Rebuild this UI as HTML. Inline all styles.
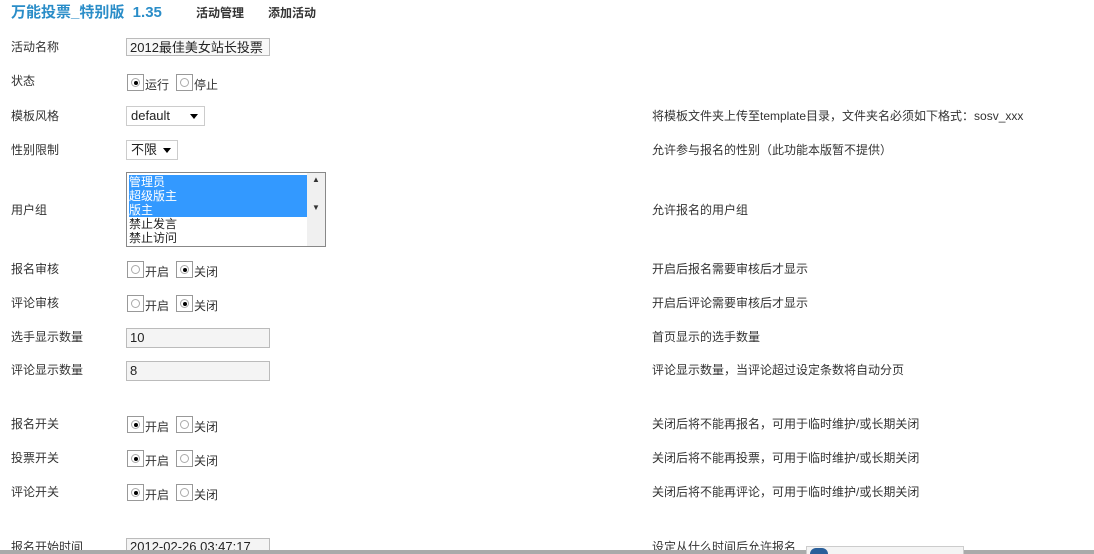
<!DOCTYPE html><html style="overflow:hidden;height:554px"><head><meta charset="utf-8"><style>
body{margin:0;width:1094px;height:554px;overflow:hidden;background:#fff;font-family:"Liberation Sans","Noto Sans CJK SC",sans-serif;font-size:12px;color:#333;position:relative}
.a{position:absolute;white-space:nowrap;line-height:14px}
.in{position:absolute;border:1px solid #bbb;background:#f4f4f4;height:18px;line-height:18px;padding-left:3px;font-size:13px;color:#222;box-sizing:border-box}
.sel{position:absolute;border:1px solid #ccc;height:20px;box-sizing:border-box;font-size:13px;line-height:18px;padding-left:4px;color:#222}
.sel:after{content:"";position:absolute;right:6px;top:7px;border:4px solid transparent;border-top:5px solid #000}
.r{position:absolute;width:17px;height:17px;border:1px solid #999;box-sizing:border-box;background:#fff}
.r:before{content:"";position:absolute;left:3px;top:3px;width:9px;height:9px;border-radius:50%;border:1px solid #aaa;box-sizing:border-box}
.r.on:after{content:"";position:absolute;left:6px;top:6px;width:4px;height:4px;border-radius:50%;background:#000}
</style></head><body>
<div class="a" style="left:11px;top:4px;font-size:15px;font-weight:bold;color:#2a8dc8;line-height:18px">万能投票_特别版 &nbsp;1.35</div>
<div class="a" style="left:196px;top:6px;font-weight:bold;color:#333">活动管理</div>
<div class="a" style="left:268px;top:6px;font-weight:bold;color:#333">添加活动</div>

<div class="a" style="left:11px;top:40px">活动名称</div>
<div class="in" style="left:126px;top:38px;width:144px;background:#f8f8f8">2012最佳美女站长投票</div>

<div class="a" style="left:11px;top:74px">状态</div>
<div class="r on" style="left:127px;top:74px"></div><div class="a" style="left:145px;top:78px">运行</div>
<div class="r" style="left:176px;top:74px"></div><div class="a" style="left:194px;top:78px">停止</div>

<div class="a" style="left:11px;top:109px">模板风格</div>
<div class="sel" style="left:126px;top:106px;width:79px">default</div>
<div class="a" style="left:652px;top:109px">将模板文件夹上传至template目录，文件夹名必须如下格式：sosv_xxx</div>

<div class="a" style="left:11px;top:143px">性别限制</div>
<div class="sel" style="left:126px;top:140px;width:52px">不限</div>
<div class="a" style="left:652px;top:143px">允许参与报名的性别（此功能本版暂不提供）</div>

<div class="a" style="left:11px;top:203px">用户组</div>
<div style="position:absolute;left:126px;top:172px;width:200px;height:75px;border:1px solid #888;box-sizing:border-box;font-size:12px;line-height:14px;color:#222">
<div style="position:absolute;left:2px;top:2px;width:178px;background:#3399ff;color:#fff">管理员<br>超级版主<br>版主</div>
<div style="position:absolute;left:2px;top:44px">禁止发言<br>禁止访问</div>
<div style="position:absolute;right:0;top:0;width:18px;height:73px;background:#f0f0f0;font-size:8px;text-align:center;color:#333">▲<br><br>▼</div>
</div>
<div class="a" style="left:652px;top:203px">允许报名的用户组</div>

<div class="a" style="left:11px;top:262px">报名审核</div>
<div class="r" style="left:127px;top:261px"></div><div class="a" style="left:145px;top:265px">开启</div>
<div class="r on" style="left:176px;top:261px"></div><div class="a" style="left:194px;top:265px">关闭</div>
<div class="a" style="left:652px;top:262px">开启后报名需要审核后才显示</div>

<div class="a" style="left:11px;top:296px">评论审核</div>
<div class="r" style="left:127px;top:295px"></div><div class="a" style="left:145px;top:299px">开启</div>
<div class="r on" style="left:176px;top:295px"></div><div class="a" style="left:194px;top:299px">关闭</div>
<div class="a" style="left:652px;top:296px">开启后评论需要审核后才显示</div>

<div class="a" style="left:11px;top:330px">选手显示数量</div>
<div class="in" style="left:126px;top:328px;width:144px;height:20px">10</div>
<div class="a" style="left:652px;top:330px">首页显示的选手数量</div>

<div class="a" style="left:11px;top:363px">评论显示数量</div>
<div class="in" style="left:126px;top:361px;width:144px;height:20px">8</div>
<div class="a" style="left:652px;top:363px">评论显示数量，当评论超过设定条数将自动分页</div>

<div class="a" style="left:11px;top:417px">报名开关</div>
<div class="r on" style="left:127px;top:416px"></div><div class="a" style="left:145px;top:420px">开启</div>
<div class="r" style="left:176px;top:416px"></div><div class="a" style="left:194px;top:420px">关闭</div>
<div class="a" style="left:652px;top:417px">关闭后将不能再报名，可用于临时维护/或长期关闭</div>

<div class="a" style="left:11px;top:451px">投票开关</div>
<div class="r on" style="left:127px;top:450px"></div><div class="a" style="left:145px;top:454px">开启</div>
<div class="r" style="left:176px;top:450px"></div><div class="a" style="left:194px;top:454px">关闭</div>
<div class="a" style="left:652px;top:451px">关闭后将不能再投票，可用于临时维护/或长期关闭</div>

<div class="a" style="left:11px;top:485px">评论开关</div>
<div class="r on" style="left:127px;top:484px"></div><div class="a" style="left:145px;top:488px">开启</div>
<div class="r" style="left:176px;top:484px"></div><div class="a" style="left:194px;top:488px">关闭</div>
<div class="a" style="left:652px;top:485px">关闭后将不能再评论，可用于临时维护/或长期关闭</div>

<div class="a" style="left:11px;top:540px">报名开始时间</div>
<div class="in" style="left:126px;top:538px;width:144px;height:16px;line-height:16px">2012-02-26 03:47:17</div>
<div class="a" style="left:652px;top:540px">设定从什么时间后允许报名</div>

<div style="position:absolute;left:0;top:550px;width:1094px;height:4px;background:#aaa"></div>
<div style="position:absolute;left:806px;top:546px;width:156px;height:8px;background:#f4f4f4;border:1px solid #ccc;border-bottom:0"></div>
<div style="position:absolute;left:810px;top:548px;width:18px;height:6px;border-radius:9px 9px 0 0;background:#2a5f9a"></div>
</body></html>
